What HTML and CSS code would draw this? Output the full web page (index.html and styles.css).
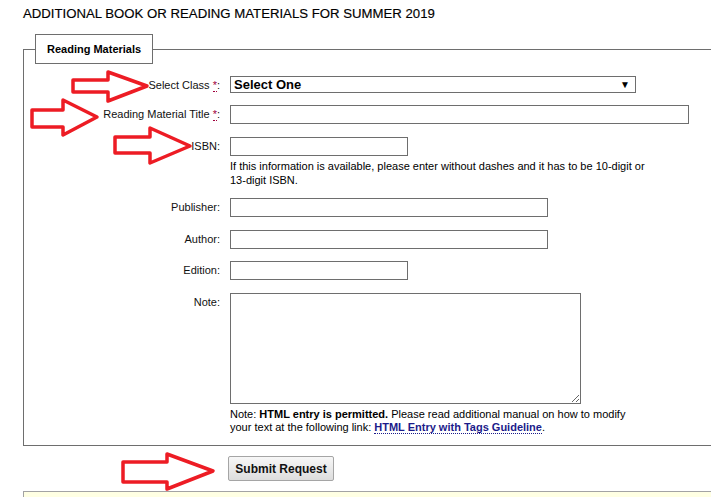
FILE: index.html
```html
<!DOCTYPE html>
<html>
<head>
<meta charset="utf-8">
<link rel="stylesheet" href="styles.css">
</head>
<body>
<div class="page">
  <h1 class="title">ADDITIONAL BOOK OR READING MATERIALS FOR SUMMER 2019</h1>
  <form class="form">
    <fieldset class="panel">
      <legend class="panel-legend">Reading Materials</legend>
      <div class="rows">
        <div class="row row-select">
          <label class="lbl">Select Class <abbr class="req" title="required">*</abbr>:</label>
          <div class="field">
            <div class="select-wrap">
              <select class="select"><option>Select One</option></select>
            </div>
          </div>
        </div>
        <div class="row">
          <label class="lbl">Reading Material Title <abbr class="req" title="required">*</abbr>:</label>
          <div class="field"><input class="input input-long" type="text"></div>
        </div>
        <div class="row row-wide">
          <label class="lbl">ISBN:</label>
          <div class="field">
            <input class="input input-short" type="text">
            <p class="help">If this information is available, please enter without dashes and it has to be 10-digit or<br>13-digit ISBN.</p>
          </div>
        </div>
        <div class="row row-tight">
          <label class="lbl">Publisher:</label>
          <div class="field"><input class="input input-mid" type="text"></div>
        </div>
        <div class="row row-wide">
          <label class="lbl">Author:</label>
          <div class="field"><input class="input input-mid" type="text"></div>
        </div>
        <div class="row">
          <label class="lbl">Edition:</label>
          <div class="field"><input class="input input-short" type="text"></div>
        </div>
        <div class="row row-wide">
          <label class="lbl">Note:</label>
          <div class="field">
            <textarea class="textarea"></textarea>
            <p class="help help-note">Note: <b>HTML entry is permitted.</b> Please read additional manual on how to modify<br>your text at the following link: <a class="guide-link" href="#">HTML Entry with Tags Guideline</a>.</p>
          </div>
        </div>
      </div>
    </fieldset>
    <div class="actions">
      <button class="btn" type="button">Submit Request</button>
    </div>
    <div class="notice"></div>
  </form>
</div>
<svg class="annot" width="711" height="497" viewBox="0 0 711 497" aria-hidden="true">
  <g fill="none" stroke="#ed1c24" stroke-width="3.5" stroke-linejoin="round">
    <polygon points="73,80 108,80 108,72 147,86 108,101 108,92 73,92"/>
    <polygon points="32,110 63,110 63,100 97,117 63,135 63,127 32,127"/>
    <polygon points="115,137 150,137 150,128 190,146 150,163 150,153 115,153"/>
    <polygon points="123,462 167,462 167,454 213,471 167,489 167,482 123,482"/>
  </g>
</svg>
</body>
</html>
```

FILE: styles.css
```css
html, body {
  margin: 0;
  padding: 0;
  overflow: hidden;
  background: #ffffff;
}
body {
  font-family: "Liberation Sans", Arial, sans-serif;
  font-size: 11px;
  color: #000;
  position: relative;
  width: 711px;
  height: 497px;
}
.page {
  padding-left: 23px;
}
.title {
  margin: 0;
  padding-top: 6px;
  font-family: "Liberation Sans", Arial, sans-serif;
  font-size: 13.2px;
  line-height: 16px;
  font-weight: normal;
  color: #000;
  -webkit-text-stroke: 0.15px #000;
}
.form {
  margin: 0;
}
.panel {
  margin: 12px -40px 0 0;
  min-width: 0;
  border: 1px solid #6e6e6e;
  padding: 12px 0 11px 11px;
}
.panel-legend {
  border: 1px solid #6e6e6e;
  padding: 0 11px;
  line-height: 28px;
  font-weight: bold;
  font-size: 11px;
  color: #000;
}
.rows {
  display: flex;
  flex-direction: column;
  gap: 12px;
}
.row {
  display: grid;
  grid-template-columns: 185px 1fr;
  column-gap: 10px;
  align-items: start;
}
.row-wide {
  margin-top: 1px;
}
.row-tight {
  margin-top: -1px;
}
.lbl {
  text-align: right;
  line-height: 19px;
  color: #111;
  white-space: nowrap;
}
.row-select .lbl {
  line-height: 17px;
  padding-top: 1px;
  margin-bottom: -1px;
}
.req {
  color: #a0003c;
  text-decoration: none;
  border-bottom: 1px dotted #a0003c;
  cursor: help;
}
.field {
  min-width: 0;
}
.select-wrap {
  position: relative;
  width: 406px;
  height: 17px;
}
.select {
  appearance: none;
  -webkit-appearance: none;
  box-sizing: border-box;
  width: 406px;
  height: 17px;
  margin: 0;
  border: 1px solid #6e6e6e;
  border-radius: 0;
  background: #fff;
  padding: 0 0 0 3px;
  font-family: "Liberation Sans", Arial, sans-serif;
  font-size: 13px;
  font-weight: bold;
  line-height: 15px;
  color: #000;
}
.select-wrap::after {
  content: "\25BC";
  position: absolute;
  right: 6px;
  top: 3px;
  font-size: 10px;
  line-height: 11px;
  color: #000;
  pointer-events: none;
}
.input {
  display: block;
  box-sizing: border-box;
  height: 19px;
  margin: 0;
  border: 1px solid #6e6e6e;
  border-radius: 0;
  padding: 0 3px;
  background: #fff;
  font-family: "Liberation Sans", Arial, sans-serif;
  font-size: 11px;
}
.input-long { width: 459px; }
.input-mid { width: 318px; }
.input-short { width: 178px; }
.help {
  margin: 3px 0 0;
  line-height: 14px;
  color: #000;
}
.help-note {
  margin-top: 4px;
  line-height: 13px;
}
.textarea {
  display: block;
  box-sizing: border-box;
  width: 351px;
  height: 111px;
  margin: 0;
  border: 1px solid #6e6e6e;
  border-radius: 0;
  padding: 2px;
  font-family: "Liberation Sans", Arial, sans-serif;
  font-size: 11px;
}
.guide-link {
  color: #1b1b8a;
  font-weight: bold;
  text-decoration: none;
  border-bottom: 1px dotted #1b1b8a;
}
.actions {
  padding: 10px 0 10px 205px;
}
.btn {
  display: block;
  box-sizing: border-box;
  width: 106px;
  height: 25px;
  margin: 0;
  border: 1px solid #a5a5a5;
  border-radius: 2px;
  background: linear-gradient(#f7f7f7, #dddddd);
  font-family: "Liberation Sans", Arial, sans-serif;
  font-size: 12px;
  font-weight: bold;
  color: #111;
  padding: 0;
}
.notice {
  margin-right: -40px;
  height: 40px;
  border: 1px solid #a3a3a3;
  background: #ffffe3;
}
.annot {
  position: absolute;
  left: 0;
  top: 0;
  pointer-events: none;
}
```
